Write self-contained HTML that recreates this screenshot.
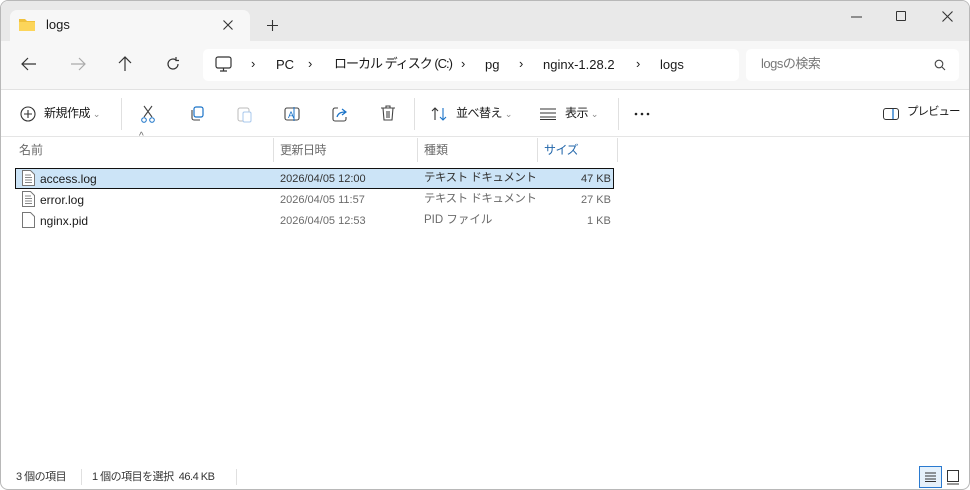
<!DOCTYPE html>
<html><head><meta charset="utf-8"><style>
*{box-sizing:border-box;margin:0;padding:0}
body{width:970px;height:490px;background:#fff;font-family:"Liberation Sans","Noto Sans CJK JP",sans-serif;font-size:12px;color:#1a1a1a;position:relative;overflow:hidden}
.win{position:absolute;left:0;top:0;width:970px;height:490px;border:1px solid #b8b8b8;border-radius:8px;overflow:hidden;background:#fff}
.title{position:absolute;left:0;top:0;width:100%;height:40px;background:#e9e9e9}
.tab{position:absolute;left:9px;top:9px;width:240px;height:31px;background:#f7f7f7;border-radius:7px 7px 0 0}
.addr{position:absolute;left:0;top:40px;width:100%;height:49px;background:#f7f7f7;border-bottom:1px solid #e2e2e2}
.box{position:absolute;background:#fff;border-radius:5px}
.a{position:absolute;white-space:nowrap;line-height:1.2}
.tool{position:absolute;left:0;top:89px;width:100%;height:47px;background:#fff;border-bottom:1px solid #e5e5e5}
.sep{position:absolute;width:1px;background:#e0e0e0}
.g{color:#6b6b6b}
.j{letter-spacing:-0.5px}
</style></head><body><div class="win">
<div class="title"></div>
<div class="tab"></div>
<svg class="a" style="left:17px;top:16px" width="18" height="15"><path d="M1 2h6l2 2h8v10H1z" fill="#f0c13c"/><path d="M1 5h16v9H1z" fill="#fcd55a"/></svg>
<div class="a" style="left:45px;top:16px;font-size:13px">logs</div>
<svg class="a" style="left:222px;top:19px" width="10" height="10"><path d="M.5.5l9 9M9.5.5l-9 9" stroke="#333" stroke-width="1.1"/></svg>
<svg class="a" style="left:266px;top:19px" width="11" height="11"><path d="M5.5 0v11M0 5.5h11" stroke="#333" stroke-width="1.1"/></svg>
<svg class="a" style="left:850px;top:15px" width="12" height="2"><path d="M0 1h11" stroke="#333"/></svg>
<div class="a" style="left:895px;top:10px;width:10px;height:10px;border:1.3px solid #333;border-radius:1px"></div>
<svg class="a" style="left:941px;top:10px" width="11" height="11"><path d="M.5.5l10 10M10.5.5l-10 10" stroke="#333" stroke-width="1.1"/></svg>

<div class="addr"></div>
<svg class="a" style="left:20px;top:56px" width="16" height="14"><path d="M1 7h14M7 1L1 7l6 6" stroke="#333" fill="none" stroke-width="1.2"/></svg>
<svg class="a" style="left:69px;top:56px" width="16" height="14"><path d="M1 7h14M9 1l6 6-6 6" stroke="#aaa" fill="none" stroke-width="1.2"/></svg>
<svg class="a" style="left:117px;top:55px" width="14" height="16"><path d="M7 15V1M1 7l6-6 6 6" stroke="#333" fill="none" stroke-width="1.2"/></svg>
<svg class="a" style="left:165px;top:56px" width="14" height="14"><path d="M12 7a5 5 0 1 1-2-4M10 0v3.5h3" stroke="#333" fill="none" stroke-width="1.2"/></svg>
<div class="box" style="left:202px;top:48px;width:536px;height:32px"></div>
<svg class="a" style="left:214px;top:55px" width="18" height="17"><rect x="1" y="1" width="15" height="11" rx="2" stroke="#333" fill="none" stroke-width="1.2"/><path d="M5 15h7M8.5 12v3" stroke="#333" stroke-width="1.2"/></svg>
<div class="a" style="left:250px;top:55px;font-size:13px">›</div>
<div class="a" style="left:275px;top:56px;font-size:13px">PC</div>
<div class="a" style="left:307px;top:55px;font-size:13px">›</div>
<div class="a" style="left:333px;top:55px;font-size:13px;letter-spacing:-1px">ローカル ディスク (C:)</div>
<div class="a" style="left:460px;top:55px;font-size:13px">›</div>
<div class="a" style="left:484px;top:56px;font-size:13px">pg</div>
<div class="a" style="left:518px;top:55px;font-size:13px">›</div>
<div class="a" style="left:542px;top:56px;font-size:13px">nginx-1.28.2</div>
<div class="a" style="left:635px;top:55px;font-size:13px">›</div>
<div class="a" style="left:659px;top:56px;font-size:13px">logs</div>
<div class="box" style="left:745px;top:48px;width:213px;height:32px"></div>
<div class="a g j" style="left:760px;top:55px;font-size:13px;color:#777">logsの検索</div>
<svg class="a" style="left:933px;top:58px" width="12" height="12"><circle cx="5" cy="5" r="3.8" stroke="#444" fill="none" stroke-width="1.1"/><path d="M8 8l3 3" stroke="#444" stroke-width="1.1"/></svg>

<div class="tool"></div>
<svg class="a" style="left:19px;top:105px" width="16" height="16"><circle cx="8" cy="8" r="7" stroke="#333" fill="none" stroke-width="1.1"/><path d="M8 4v8M4 8h8" stroke="#333" stroke-width="1.1"/></svg>
<div class="a j" style="left:43px;top:105px;font-size:12px">新規作成 <span style="color:#888;font-size:9px">⌄</span></div>
<div class="sep" style="left:120px;top:97px;height:32px"></div>
<svg class="a" style="left:139px;top:104px" width="16" height="18"><path d="M4 1l8 11M12 1L4 12" stroke="#444" stroke-width="1.1"/><circle cx="4" cy="15" r="2.3" stroke="#1a73c8" fill="none"/><circle cx="12" cy="15" r="2.3" stroke="#1a73c8" fill="none"/></svg>
<svg class="a" style="left:188px;top:105px" width="16" height="16"><rect x="5" y="1" width="9" height="10" rx="2" stroke="#1a73c8" fill="none" stroke-width="1.2"/><path d="M3 4v8a2 2 0 0 0 2 2h6" stroke="#444" fill="none" stroke-width="1.1"/></svg>
<svg class="a" style="left:236px;top:105px" width="16" height="17"><rect x="1" y="2" width="11" height="13" rx="2" stroke="#bbb" fill="none"/><rect x="6" y="6" width="8" height="10" rx="1.5" stroke="#a8c8ec" fill="#fff"/></svg>
<svg class="a" style="left:283px;top:105px" width="16" height="16"><rect x="1" y="2" width="14" height="12" rx="2" stroke="#444" fill="none" stroke-width="1.1"/><text x="4" y="12" font-size="9" fill="#1a73c8" font-family="Liberation Sans">A</text><path d="M10 1v14" stroke="#1a73c8"/></svg>
<svg class="a" style="left:331px;top:105px" width="16" height="16"><path d="M6 2H3a2 2 0 0 0-2 2v9a2 2 0 0 0 2 2h9a2 2 0 0 0 2-2v-2" stroke="#444" fill="none" stroke-width="1.1"/><path d="M5 11c1-4 4-5 8-5M10 3l4 3-4 3" stroke="#1a73c8" fill="none" stroke-width="1.2"/></svg>
<svg class="a" style="left:379px;top:104px" width="16" height="17"><path d="M1 3h14M6 3V1h4v2M3 3l1 12h8l1-12M7 6v7M9 6v7" stroke="#444" fill="none" stroke-width="1.1"/></svg>
<div class="sep" style="left:413px;top:97px;height:32px"></div>
<svg class="a" style="left:430px;top:106px" width="16" height="14"><path d="M4 13V1M1 4l3-3 3 3" stroke="#333" fill="none" stroke-width="1.1"/><path d="M12 1v12M9 10l3 3 3-3" stroke="#1a73c8" fill="none" stroke-width="1.1"/></svg>
<div class="a j" style="left:455px;top:105px">並べ替え <span style="color:#888;font-size:9px">⌄</span></div>
<svg class="a" style="left:539px;top:107px" width="16" height="12"><path d="M0 1h16M0 5h16M0 9h16M0 11.5h16" stroke="#333" stroke-width="1"/></svg>
<div class="a j" style="left:564px;top:105px">表示 <span style="color:#888;font-size:9px">⌄</span></div>
<div class="sep" style="left:617px;top:97px;height:32px"></div>
<svg class="a" style="left:633px;top:111px" width="18" height="4"><circle cx="2" cy="2" r="1.3" fill="#222"/><circle cx="8" cy="2" r="1.3" fill="#222"/><circle cx="14" cy="2" r="1.3" fill="#222"/></svg>
<svg class="a" style="left:882px;top:107px" width="16" height="12"><rect x="0.5" y="0.5" width="15" height="11" rx="2.5" stroke="#333" fill="none"/><path d="M10 1v10" stroke="#1a73c8" stroke-width="1.3"/></svg>
<div class="a" style="left:906px;top:105px;font-size:11.5px;letter-spacing:-1px">プレビュー</div>

<div class="a" style="left:138px;top:130px;font-size:10px;color:#666">^</div>
<div class="a g" style="left:18px;top:142px">名前</div>
<div class="sep" style="left:272px;top:137px;height:24px"></div>
<div class="a g j" style="left:279px;top:142px">更新日時</div>
<div class="sep" style="left:416px;top:137px;height:24px"></div>
<div class="a g" style="left:423px;top:142px">種類</div>
<div class="sep" style="left:536px;top:137px;height:24px"></div>
<div class="a j" style="left:543px;top:142px;color:#2266aa">サイズ</div>
<div class="sep" style="left:616px;top:137px;height:24px"></div>

<div class="a" style="left:14px;top:167px;width:599px;height:21px;background:#cce4f7;border:1px solid #111"></div>
<svg class="a" style="left:21px;top:169px" width="13" height="16"><path d="M.5.5h8l4 4v11H.5z" fill="#fff" stroke="#777"/><path d="M3 5h6M3 7.5h7M3 10h7M3 12.5h7" stroke="#888"/></svg>
<div class="a" style="left:39px;top:171px">access.log</div>
<div class="a" style="left:279px;top:172px;font-size:11px;color:#333">2026/04/05 12:00</div>
<div class="a j" style="left:423px;top:171px;font-size:11.5px;color:#333">テキスト ドキュメント</div>
<div class="a" style="left:580px;top:172px;font-size:11px;color:#333">47 KB</div>

<svg class="a" style="left:21px;top:190px" width="13" height="16"><path d="M.5.5h8l4 4v11H.5z" fill="#fff" stroke="#777"/><path d="M3 5h6M3 7.5h7M3 10h7M3 12.5h7" stroke="#888"/></svg>
<div class="a" style="left:39px;top:192px">error.log</div>
<div class="a g" style="left:279px;top:193px;font-size:11px">2026/04/05 11:57</div>
<div class="a g j" style="left:423px;top:192px;font-size:11.5px">テキスト ドキュメント</div>
<div class="a g" style="left:580px;top:193px;font-size:11px">27 KB</div>

<svg class="a" style="left:21px;top:211px" width="13" height="16"><path d="M.5.5h8l4 4v11H.5z" fill="#fff" stroke="#777"/></svg>
<div class="a" style="left:39px;top:213px">nginx.pid</div>
<div class="a g" style="left:279px;top:214px;font-size:11px">2026/04/05 12:53</div>
<div class="a g" style="left:423px;top:213px;font-size:11.5px">PID ファイル</div>
<div class="a g" style="left:586px;top:214px;font-size:11px">1 KB</div>

<div class="a j" style="left:15px;top:470px;font-size:11px;color:#333">3 個の項目</div>
<div class="sep" style="left:80px;top:468px;height:16px"></div>
<div class="a j" style="left:91px;top:470px;font-size:11px;color:#333">1 個の項目を選択&nbsp; 46.4 KB</div>
<div class="sep" style="left:235px;top:468px;height:16px"></div>
<div class="a" style="left:918px;top:465px;width:23px;height:22px;background:#e5f1fb;border:1px solid #2a7ad0"></div>
<svg class="a" style="left:924px;top:471px" width="11" height="10"><path d="M0 1h11M0 4h11M0 7h11M0 9.5h11" stroke="#333"/></svg>
<svg class="a" style="left:946px;top:469px" width="12" height="15"><rect x=".5" y=".5" width="11" height="11" stroke="#333" fill="none"/><path d="M0 14h12" stroke="#333"/></svg>
</div></body></html>
